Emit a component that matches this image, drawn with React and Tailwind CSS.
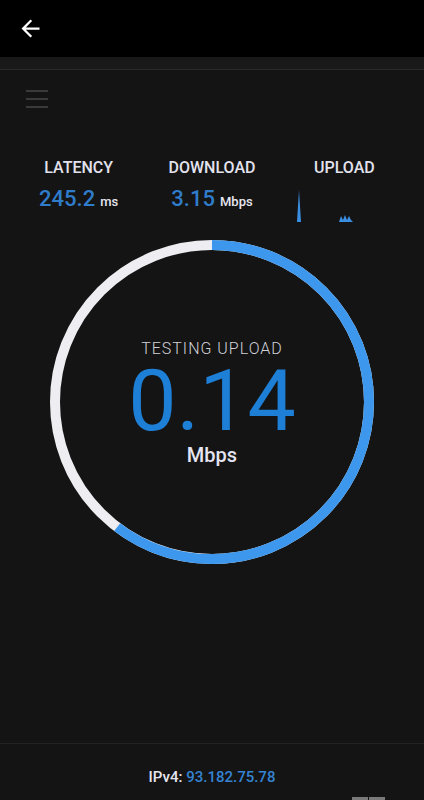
import React from 'react';

const font = { fontFamily: 'Roboto, "Liberation Sans", sans-serif' };

function Stat({ label, value, unit }) {
  return (
    <div className="flex flex-col items-center">
      <span className="text-[16px] leading-[18px] font-medium text-[#e2e2ee]">{label}</span>
      <span className="mt-[10px] flex items-baseline">
        <span className="text-[22px] leading-[24px] font-medium text-[#2f7ccb]">{value}</span>
        <span className="ml-[5px] text-[13px] font-medium text-[#e6e6f0]">{unit}</span>
      </span>
    </div>
  );
}

export default function App() {
  const r = 157;
  const circ = 2 * Math.PI * r;
  const progress = 0.603;

  return (
    <div className="w-[424px] h-[800px] bg-[#141414] flex flex-col overflow-hidden" style={font}>
      {/* top bar */}
      <div className="h-[57px] bg-black flex items-center shrink-0">
        <svg width="27" height="27" viewBox="0 0 24 24" className="ml-[17px] -mt-[1px]">
          <path fill="#ffffff" d="M20 11H7.83l5.59-5.59L12 4l-8 8 8 8 1.41-1.41L7.83 13H20v-2z" />
        </svg>
      </div>
      <div className="h-[13px] bg-[#191919] border-b border-[#2a2a2a] shrink-0" />

      {/* menu */}
      <div className="pl-[26px] pt-[20px] flex flex-col gap-[6px] shrink-0">
        <div className="w-[22px] h-[2px] bg-[#3a3a3a]" />
        <div className="w-[22px] h-[2px] bg-[#3a3a3a]" />
        <div className="w-[22px] h-[2px] bg-[#3a3a3a]" />
      </div>

      {/* stats */}
      <div className="grid grid-cols-3 items-start px-[12px] mt-[51px] shrink-0">
        <Stat label="LATENCY" value="245.2" unit="ms" />
        <Stat label="DOWNLOAD" value="3.15" unit="Mbps" />
        <div className="flex flex-col items-center">
          <span className="text-[16px] leading-[18px] font-medium text-[#e2e2ee] ml-[-2px]">UPLOAD</span>
          <svg width="62" height="34" viewBox="0 0 62 34" className="self-start mt-[12px] ml-[18px]">
            <path fill="#3b8fe3" d="M0 33 L2 1 L4 33 Z" />
            <path fill="#3b8fe3" d="M42 33 L44 27 L46 31 L48 26 L50 31 L52 27 L54 31 L56 33 Z" />
          </svg>
        </div>
      </div>

      {/* gauge */}
      <div className="relative w-[330px] h-[330px] mx-auto mt-[14px] shrink-0">
        <svg width="330" height="330" viewBox="0 0 330 330">
          <circle cx="165" cy="165" r={r} fill="none" stroke="#eeeef2" strokeWidth="10" />
          <circle
            cx="165"
            cy="165"
            r={r}
            fill="none"
            stroke="#3d97ec"
            strokeWidth="10"
            strokeDasharray={`${circ * progress} ${circ}`}
            transform="rotate(-90 165 165)"
          />
        </svg>
        <div className="absolute inset-0 flex flex-col items-center">
          <span className="mt-[103px] text-[16px] leading-[18px] tracking-[1px] font-light text-[#d0d0d8]">TESTING UPLOAD</span>
          <span className="text-[86px] leading-[86px] font-normal text-[#1d7fd6]">0.14</span>
          <span className="text-[20px] leading-[22px] font-medium text-[#e4e4f2]">Mbps</span>
        </div>
      </div>

      <div className="flex-1" />

      {/* footer */}
      <div className="border-t border-[#232323] h-[57px] flex flex-col items-center shrink-0 relative">
        <div className="mt-[24px] text-[15px] leading-[18px] font-medium">
          <span className="text-[#e6e6f0]">IPv4: </span>
          <span className="text-[#3583d2]">93.182.75.78</span>
        </div>
        <div className="absolute left-[352px] bottom-0 flex gap-[1px]">
          <div className="w-[16px] h-[3px] bg-[#7a7a7a]" />
          <div className="w-[16px] h-[3px] bg-[#7a7a7a]" />
        </div>
      </div>
    </div>
  );
}
